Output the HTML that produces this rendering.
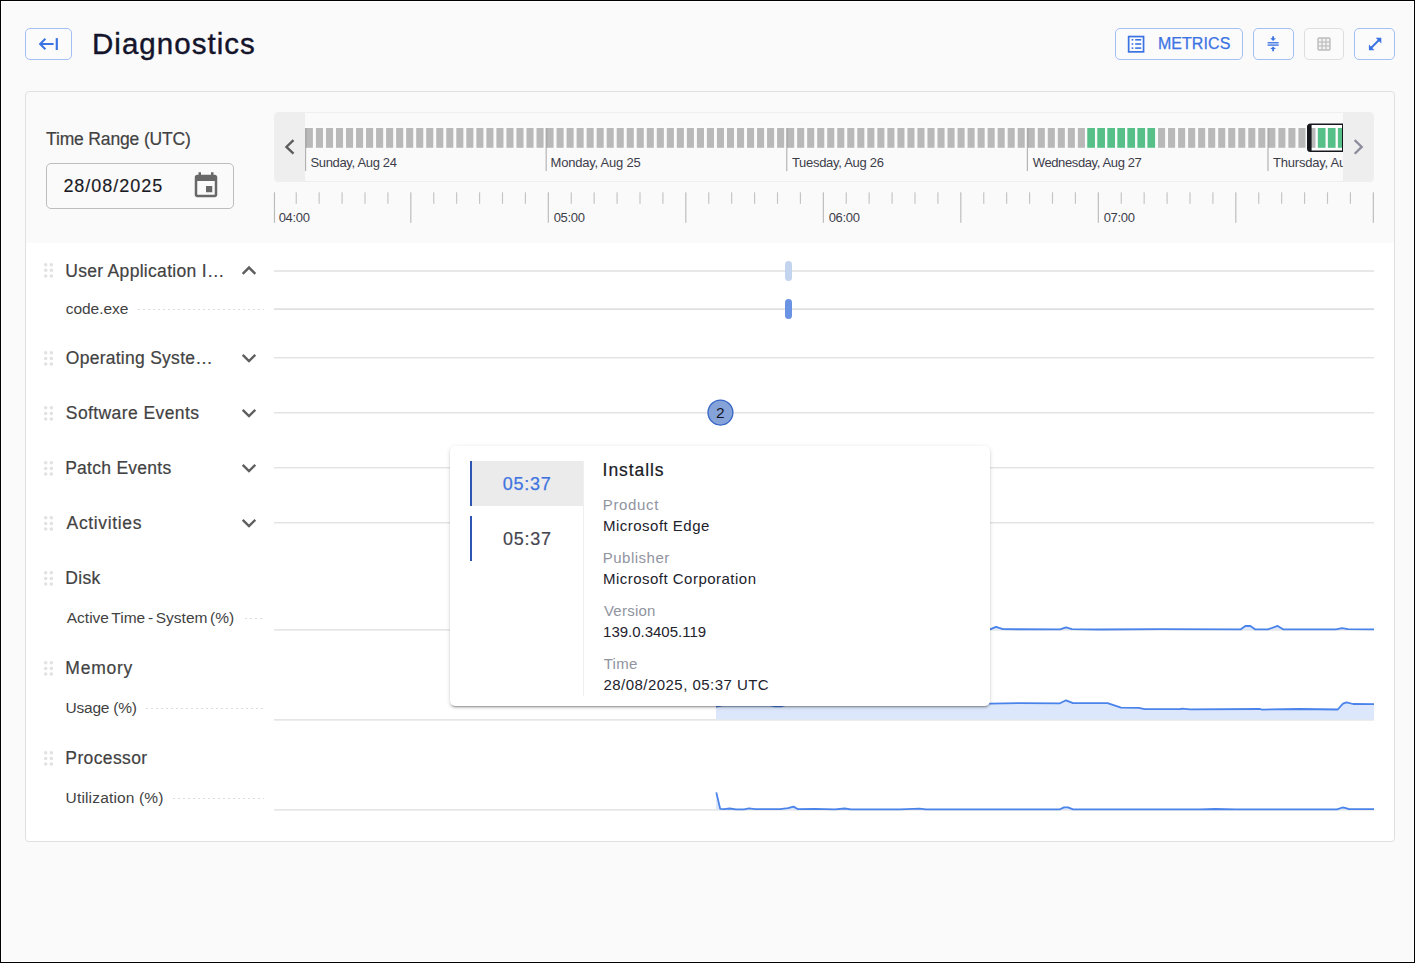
<!DOCTYPE html>
<html lang="en"><head><meta charset="utf-8"><title>Diagnostics</title>
<style>
html,body{margin:0;padding:0}
body{width:1415px;height:963px;position:relative;overflow:hidden;background:#fafafa;font-family:"Liberation Sans",sans-serif}
.b{position:absolute;display:block}
.t{position:absolute;white-space:nowrap;line-height:20px}
.btn{position:absolute;box-sizing:border-box;border:1px solid #a3bff5;border-radius:5px;background:#fbfbfc}
</style></head><body>
<div class="btn" style="left:25px;top:28px;width:47px;height:32px;"></div>
<svg class="b" style="left:36px;top:34px" width="24" height="20" viewBox="0 0 24 20"><g fill="none" stroke="#3b73e3" stroke-width="2"><path d="M17.6 10H4.6"/><path d="M9.4 4.7L4.1 10l5.300 5.300"/><path d="M20.8 4.1v11.9" stroke-width="2.2"/></g></svg>
<div class="t" style="left:91.98px;top:34px;font-size:29.5px;color:#14142b;letter-spacing:1.04px;font-weight:400;-webkit-text-stroke:0.4px #14142b;">Diagnostics</div>
<div class="btn" style="left:1115px;top:28px;width:128px;height:32px;"></div>
<div class="btn" style="left:1253px;top:28px;width:41px;height:32px;"></div>
<div class="btn" style="left:1304px;top:28px;width:40px;height:32px;border-color:#dedede"></div>
<div class="btn" style="left:1354px;top:28px;width:41px;height:32px;"></div>
<svg class="b" style="left:1127px;top:35px" width="18" height="19" viewBox="0 0 18 19"><rect x="1.65" y="1.55" width="14.9" height="15.3" fill="none" stroke="#3b73e3" stroke-width="1.7"/><g fill="#3b73e3"><rect x="4.6" y="4.0" width="1.7" height="1.6"/><rect x="8.2" y="4.0" width="6" height="1.6"/><rect x="4.6" y="8.2" width="1.7" height="1.6"/><rect x="8.2" y="8.2" width="6" height="1.6"/><rect x="4.6" y="12.3" width="1.7" height="1.6"/><rect x="8.2" y="12.3" width="6" height="1.6"/></g></svg>
<div class="t" style="left:1157.89px;top:34px;font-size:16px;color:#3b73e3;letter-spacing:0.074px;font-weight:400;-webkit-text-stroke:0.25px #3b73e3">METRICS</div>
<svg class="b" style="left:1265px;top:35px" width="16" height="18" viewBox="0 0 16 18"><g fill="#3b73e3"><rect x="2.6" y="7.1" width="11.1" height="1.35"/><rect x="2.6" y="9.4" width="11.1" height="1.35"/><path d="M7.2 1.200h1.800v2.100h2L8.100 6.100 5.200 3.300h2z"/><path d="M7.200 16.200h1.800v-2.100h2L8.100 11.600 5.200 14.100h2z"/></g></svg>
<svg class="b" style="left:1317px;top:37px" width="14" height="14" viewBox="0 0 14 14"><rect x="0.3" y="0.3" width="13.4" height="13.4" rx="1.6" fill="#bdbdbd"/><g fill="#f3f3f3"><rect x="1.75" y="1.75" width="2.7" height="2.7"/><rect x="1.75" y="5.65" width="2.7" height="2.7"/><rect x="1.75" y="9.55" width="2.7" height="2.7"/><rect x="5.65" y="1.75" width="2.7" height="2.7"/><rect x="5.65" y="5.65" width="2.7" height="2.7"/><rect x="5.65" y="9.55" width="2.7" height="2.7"/><rect x="9.55" y="1.75" width="2.7" height="2.7"/><rect x="9.55" y="5.65" width="2.7" height="2.7"/><rect x="9.55" y="9.55" width="2.7" height="2.7"/></g></svg>
<svg class="b" style="left:1368px;top:37px" width="14" height="14" viewBox="0 0 14 14"><path d="M3 11L11 3" stroke="#3b73e3" stroke-width="1.9" fill="none"/><path d="M13.3 0.8v5.6L7.7 0.8zM0.9 13.2V7.6l5.6 5.6z" fill="#3b73e3"/></svg>
<div class="b" style="left:25px;top:91px;width:1370px;height:751px;border:1px solid #e0e0e0;border-radius:4px;box-sizing:border-box;background:#fafafa"></div>
<div class="b" style="left:26px;top:243px;width:1368px;height:598px;background:#fff;border-radius:0 0 4px 4px"></div>
<div class="t" style="left:46.01px;top:129px;font-size:17.5px;color:#424242;letter-spacing:-0.148px;font-weight:400;-webkit-text-stroke:0.2px #424242;">Time Range (UTC)</div>
<div class="b" style="left:46px;top:163px;width:188px;height:46px;border:1px solid #bdbdbd;border-radius:5px;box-sizing:border-box"></div>
<div class="t" style="left:63.39px;top:176px;font-size:18px;color:#1a1a24;letter-spacing:0.975px;font-weight:400;-webkit-text-stroke:0.15px #1a1a24;">28/08/2025</div>
<svg class="b" style="left:191px;top:170.75px" width="30" height="30" viewBox="0 0 24 24"><path fill="#686868" d="M17 12h-5v5h5v-5zM16 1v2H8V1H6v2H5c-1.11 0-1.99.9-1.99 2L3 19c0 1.100.89 2 2 2h14c1.100 0 2-.9 2-2V5c0-1.100-.9-2-2-2h-1V1h-2zm3 18H5V8h14v11z"/></svg>
<div class="b" style="left:274px;top:112px;width:1100px;height:70px;background:#fafafa;border:1px solid #efefef;border-radius:4px;box-sizing:border-box;overflow:hidden"><div class="b" style="left:-1px;top:-1px;width:31px;height:70px;background:#eeeeee"></div><div class="b" style="left:1068px;top:-1px;width:31px;height:70px;background:#eeeeee"></div></div>
<svg class="b" style="left:280px;top:136px" width="20" height="22" viewBox="0 0 20 22"><path d="M13.5 4.1L6.400 10.900l7.100 6.800" fill="none" stroke="#5c5c5c" stroke-width="2.3"/></svg>
<svg class="b" style="left:1348px;top:136px" width="20" height="22" viewBox="0 0 20 22"><path d="M6.700 4.100L13.700 10.900l-7.000 6.800" fill="none" stroke="#8c8c9c" stroke-width="2.3"/></svg>
<svg class="b" style="left:305px;top:120px" width="1038" height="60" viewBox="0 0 1038 60"><rect x="1002" y="3.4" width="36" height="28.8" fill="#fff"/><rect x="-0.60" y="7.4" width="9.10" height="21" fill="#fdfdfd"/><rect x="0.00" y="8" width="7.9" height="19.800" fill="#b9b9b9"/><rect x="10.33" y="7.4" width="8.30" height="21" fill="#fdfdfd"/><rect x="10.93" y="8" width="7.1" height="19.800" fill="#b9b9b9"/><rect x="20.35" y="7.4" width="8.30" height="21" fill="#fdfdfd"/><rect x="20.95" y="8" width="7.1" height="19.800" fill="#b9b9b9"/><rect x="30.38" y="7.4" width="8.30" height="21" fill="#fdfdfd"/><rect x="30.98" y="8" width="7.1" height="19.800" fill="#b9b9b9"/><rect x="40.40" y="7.4" width="8.30" height="21" fill="#fdfdfd"/><rect x="41.00" y="8" width="7.1" height="19.800" fill="#b9b9b9"/><rect x="50.42" y="7.4" width="8.30" height="21" fill="#fdfdfd"/><rect x="51.02" y="8" width="7.1" height="19.800" fill="#b9b9b9"/><rect x="60.45" y="7.4" width="8.30" height="21" fill="#fdfdfd"/><rect x="61.05" y="8" width="7.1" height="19.800" fill="#b9b9b9"/><rect x="70.48" y="7.4" width="8.30" height="21" fill="#fdfdfd"/><rect x="71.08" y="8" width="7.1" height="19.800" fill="#b9b9b9"/><rect x="80.50" y="7.4" width="8.30" height="21" fill="#fdfdfd"/><rect x="81.10" y="8" width="7.1" height="19.800" fill="#b9b9b9"/><rect x="90.53" y="7.4" width="8.30" height="21" fill="#fdfdfd"/><rect x="91.13" y="8" width="7.1" height="19.800" fill="#b9b9b9"/><rect x="100.55" y="7.4" width="8.30" height="21" fill="#fdfdfd"/><rect x="101.15" y="8" width="7.1" height="19.800" fill="#b9b9b9"/><rect x="110.58" y="7.4" width="8.30" height="21" fill="#fdfdfd"/><rect x="111.18" y="8" width="7.1" height="19.800" fill="#b9b9b9"/><rect x="120.60" y="7.4" width="8.30" height="21" fill="#fdfdfd"/><rect x="121.20" y="8" width="7.1" height="19.800" fill="#b9b9b9"/><rect x="130.63" y="7.4" width="8.30" height="21" fill="#fdfdfd"/><rect x="131.23" y="8" width="7.1" height="19.800" fill="#b9b9b9"/><rect x="140.65" y="7.4" width="8.30" height="21" fill="#fdfdfd"/><rect x="141.25" y="8" width="7.1" height="19.800" fill="#b9b9b9"/><rect x="150.68" y="7.4" width="8.30" height="21" fill="#fdfdfd"/><rect x="151.28" y="8" width="7.1" height="19.800" fill="#b9b9b9"/><rect x="160.70" y="7.4" width="8.30" height="21" fill="#fdfdfd"/><rect x="161.30" y="8" width="7.1" height="19.800" fill="#b9b9b9"/><rect x="170.73" y="7.4" width="8.30" height="21" fill="#fdfdfd"/><rect x="171.33" y="8" width="7.1" height="19.800" fill="#b9b9b9"/><rect x="180.75" y="7.4" width="8.30" height="21" fill="#fdfdfd"/><rect x="181.35" y="8" width="7.1" height="19.800" fill="#b9b9b9"/><rect x="190.78" y="7.4" width="8.30" height="21" fill="#fdfdfd"/><rect x="191.38" y="8" width="7.1" height="19.800" fill="#b9b9b9"/><rect x="200.80" y="7.4" width="8.30" height="21" fill="#fdfdfd"/><rect x="201.40" y="8" width="7.1" height="19.800" fill="#b9b9b9"/><rect x="210.83" y="7.4" width="8.30" height="21" fill="#fdfdfd"/><rect x="211.43" y="8" width="7.1" height="19.800" fill="#b9b9b9"/><rect x="220.85" y="7.4" width="8.30" height="21" fill="#fdfdfd"/><rect x="221.45" y="8" width="7.1" height="19.800" fill="#b9b9b9"/><rect x="230.88" y="7.4" width="8.30" height="21" fill="#fdfdfd"/><rect x="231.48" y="8" width="7.1" height="19.800" fill="#b9b9b9"/><rect x="240.90" y="7.4" width="8.30" height="21" fill="#fdfdfd"/><rect x="241.50" y="8" width="7.1" height="19.800" fill="#b9b9b9"/><rect x="250.93" y="7.4" width="8.30" height="21" fill="#fdfdfd"/><rect x="251.53" y="8" width="7.1" height="19.800" fill="#b9b9b9"/><rect x="260.95" y="7.4" width="8.30" height="21" fill="#fdfdfd"/><rect x="261.55" y="8" width="7.1" height="19.800" fill="#b9b9b9"/><rect x="270.97" y="7.4" width="8.30" height="21" fill="#fdfdfd"/><rect x="271.57" y="8" width="7.1" height="19.800" fill="#b9b9b9"/><rect x="281.00" y="7.4" width="8.30" height="21" fill="#fdfdfd"/><rect x="281.60" y="8" width="7.1" height="19.800" fill="#b9b9b9"/><rect x="291.02" y="7.4" width="8.30" height="21" fill="#fdfdfd"/><rect x="291.62" y="8" width="7.1" height="19.800" fill="#b9b9b9"/><rect x="301.05" y="7.4" width="8.30" height="21" fill="#fdfdfd"/><rect x="301.65" y="8" width="7.1" height="19.800" fill="#b9b9b9"/><rect x="311.07" y="7.4" width="8.30" height="21" fill="#fdfdfd"/><rect x="311.68" y="8" width="7.1" height="19.800" fill="#b9b9b9"/><rect x="321.10" y="7.4" width="8.30" height="21" fill="#fdfdfd"/><rect x="321.70" y="8" width="7.1" height="19.800" fill="#b9b9b9"/><rect x="331.12" y="7.4" width="8.30" height="21" fill="#fdfdfd"/><rect x="331.72" y="8" width="7.1" height="19.800" fill="#b9b9b9"/><rect x="341.15" y="7.4" width="8.30" height="21" fill="#fdfdfd"/><rect x="341.75" y="8" width="7.1" height="19.800" fill="#b9b9b9"/><rect x="351.17" y="7.4" width="8.30" height="21" fill="#fdfdfd"/><rect x="351.77" y="8" width="7.1" height="19.800" fill="#b9b9b9"/><rect x="361.20" y="7.4" width="8.30" height="21" fill="#fdfdfd"/><rect x="361.80" y="8" width="7.1" height="19.800" fill="#b9b9b9"/><rect x="371.22" y="7.4" width="8.30" height="21" fill="#fdfdfd"/><rect x="371.82" y="8" width="7.1" height="19.800" fill="#b9b9b9"/><rect x="381.25" y="7.4" width="8.30" height="21" fill="#fdfdfd"/><rect x="381.85" y="8" width="7.1" height="19.800" fill="#b9b9b9"/><rect x="391.27" y="7.4" width="8.30" height="21" fill="#fdfdfd"/><rect x="391.88" y="8" width="7.1" height="19.800" fill="#b9b9b9"/><rect x="401.30" y="7.4" width="8.30" height="21" fill="#fdfdfd"/><rect x="401.90" y="8" width="7.1" height="19.800" fill="#b9b9b9"/><rect x="411.32" y="7.4" width="8.30" height="21" fill="#fdfdfd"/><rect x="411.93" y="8" width="7.1" height="19.800" fill="#b9b9b9"/><rect x="421.35" y="7.4" width="8.30" height="21" fill="#fdfdfd"/><rect x="421.95" y="8" width="7.1" height="19.800" fill="#b9b9b9"/><rect x="431.37" y="7.4" width="8.30" height="21" fill="#fdfdfd"/><rect x="431.97" y="8" width="7.1" height="19.800" fill="#b9b9b9"/><rect x="441.40" y="7.4" width="8.30" height="21" fill="#fdfdfd"/><rect x="442.00" y="8" width="7.1" height="19.800" fill="#b9b9b9"/><rect x="451.42" y="7.4" width="8.30" height="21" fill="#fdfdfd"/><rect x="452.02" y="8" width="7.1" height="19.800" fill="#b9b9b9"/><rect x="461.45" y="7.4" width="8.30" height="21" fill="#fdfdfd"/><rect x="462.05" y="8" width="7.1" height="19.800" fill="#b9b9b9"/><rect x="471.47" y="7.4" width="8.30" height="21" fill="#fdfdfd"/><rect x="472.07" y="8" width="7.1" height="19.800" fill="#b9b9b9"/><rect x="481.50" y="7.4" width="8.30" height="21" fill="#fdfdfd"/><rect x="482.10" y="8" width="7.1" height="19.800" fill="#b9b9b9"/><rect x="491.52" y="7.4" width="8.30" height="21" fill="#fdfdfd"/><rect x="492.12" y="8" width="7.1" height="19.800" fill="#b9b9b9"/><rect x="501.55" y="7.4" width="8.30" height="21" fill="#fdfdfd"/><rect x="502.15" y="8" width="7.1" height="19.800" fill="#b9b9b9"/><rect x="511.58" y="7.4" width="8.30" height="21" fill="#fdfdfd"/><rect x="512.18" y="8" width="7.1" height="19.800" fill="#b9b9b9"/><rect x="521.60" y="7.4" width="8.30" height="21" fill="#fdfdfd"/><rect x="522.20" y="8" width="7.1" height="19.800" fill="#b9b9b9"/><rect x="531.62" y="7.4" width="8.30" height="21" fill="#fdfdfd"/><rect x="532.23" y="8" width="7.1" height="19.800" fill="#b9b9b9"/><rect x="541.65" y="7.4" width="8.30" height="21" fill="#fdfdfd"/><rect x="542.25" y="8" width="7.1" height="19.800" fill="#b9b9b9"/><rect x="551.67" y="7.4" width="8.30" height="21" fill="#fdfdfd"/><rect x="552.27" y="8" width="7.1" height="19.800" fill="#b9b9b9"/><rect x="561.70" y="7.4" width="8.30" height="21" fill="#fdfdfd"/><rect x="562.30" y="8" width="7.1" height="19.800" fill="#b9b9b9"/><rect x="571.73" y="7.4" width="8.30" height="21" fill="#fdfdfd"/><rect x="572.33" y="8" width="7.1" height="19.800" fill="#b9b9b9"/><rect x="581.75" y="7.4" width="8.30" height="21" fill="#fdfdfd"/><rect x="582.35" y="8" width="7.1" height="19.800" fill="#b9b9b9"/><rect x="591.77" y="7.4" width="8.30" height="21" fill="#fdfdfd"/><rect x="592.38" y="8" width="7.1" height="19.800" fill="#b9b9b9"/><rect x="601.80" y="7.4" width="8.30" height="21" fill="#fdfdfd"/><rect x="602.40" y="8" width="7.1" height="19.800" fill="#b9b9b9"/><rect x="611.82" y="7.4" width="8.30" height="21" fill="#fdfdfd"/><rect x="612.42" y="8" width="7.1" height="19.800" fill="#b9b9b9"/><rect x="621.85" y="7.4" width="8.30" height="21" fill="#fdfdfd"/><rect x="622.45" y="8" width="7.1" height="19.800" fill="#b9b9b9"/><rect x="631.88" y="7.4" width="8.30" height="21" fill="#fdfdfd"/><rect x="632.48" y="8" width="7.1" height="19.800" fill="#b9b9b9"/><rect x="641.90" y="7.4" width="8.30" height="21" fill="#fdfdfd"/><rect x="642.50" y="8" width="7.1" height="19.800" fill="#b9b9b9"/><rect x="651.92" y="7.4" width="8.30" height="21" fill="#fdfdfd"/><rect x="652.52" y="8" width="7.1" height="19.800" fill="#b9b9b9"/><rect x="661.95" y="7.4" width="8.30" height="21" fill="#fdfdfd"/><rect x="662.55" y="8" width="7.1" height="19.800" fill="#b9b9b9"/><rect x="671.98" y="7.4" width="8.30" height="21" fill="#fdfdfd"/><rect x="672.58" y="8" width="7.1" height="19.800" fill="#b9b9b9"/><rect x="682.00" y="7.4" width="8.30" height="21" fill="#fdfdfd"/><rect x="682.60" y="8" width="7.1" height="19.800" fill="#b9b9b9"/><rect x="692.02" y="7.4" width="8.30" height="21" fill="#fdfdfd"/><rect x="692.62" y="8" width="7.1" height="19.800" fill="#b9b9b9"/><rect x="702.05" y="7.4" width="8.30" height="21" fill="#fdfdfd"/><rect x="702.65" y="8" width="7.1" height="19.800" fill="#b9b9b9"/><rect x="712.07" y="7.4" width="8.30" height="21" fill="#fdfdfd"/><rect x="712.67" y="8" width="7.1" height="19.800" fill="#b9b9b9"/><rect x="722.10" y="7.4" width="8.30" height="21" fill="#fdfdfd"/><rect x="722.70" y="8" width="7.1" height="19.800" fill="#b9b9b9"/><rect x="732.12" y="7.4" width="8.30" height="21" fill="#fdfdfd"/><rect x="732.73" y="8" width="7.1" height="19.800" fill="#b9b9b9"/><rect x="742.15" y="7.4" width="8.30" height="21" fill="#fdfdfd"/><rect x="742.75" y="8" width="7.1" height="19.800" fill="#b9b9b9"/><rect x="752.17" y="7.4" width="8.30" height="21" fill="#fdfdfd"/><rect x="752.77" y="8" width="7.1" height="19.800" fill="#b9b9b9"/><rect x="762.20" y="7.4" width="8.30" height="21" fill="#fdfdfd"/><rect x="762.80" y="8" width="7.1" height="19.800" fill="#b9b9b9"/><rect x="772.23" y="7.4" width="8.30" height="21" fill="#fdfdfd"/><rect x="772.83" y="8" width="7.1" height="19.800" fill="#b9b9b9"/><rect x="781.65" y="7.4" width="8.90" height="21" fill="#fdfdfd"/><rect x="782.25" y="8" width="7.7" height="19.800" fill="#56c088"/><rect x="791.67" y="7.4" width="8.90" height="21" fill="#fdfdfd"/><rect x="792.27" y="8" width="7.7" height="19.800" fill="#56c088"/><rect x="801.70" y="7.4" width="8.90" height="21" fill="#fdfdfd"/><rect x="802.30" y="8" width="7.7" height="19.800" fill="#56c088"/><rect x="811.72" y="7.4" width="8.90" height="21" fill="#fdfdfd"/><rect x="812.32" y="8" width="7.7" height="19.800" fill="#56c088"/><rect x="821.75" y="7.4" width="8.90" height="21" fill="#fdfdfd"/><rect x="822.35" y="8" width="7.7" height="19.800" fill="#56c088"/><rect x="831.77" y="7.4" width="8.90" height="21" fill="#fdfdfd"/><rect x="832.38" y="8" width="7.7" height="19.800" fill="#56c088"/><rect x="841.80" y="7.4" width="8.90" height="21" fill="#fdfdfd"/><rect x="842.40" y="8" width="7.7" height="19.800" fill="#56c088"/><rect x="852.42" y="7.4" width="8.30" height="21" fill="#fdfdfd"/><rect x="853.02" y="8" width="7.1" height="19.800" fill="#b9b9b9"/><rect x="862.45" y="7.4" width="8.30" height="21" fill="#fdfdfd"/><rect x="863.05" y="8" width="7.1" height="19.800" fill="#b9b9b9"/><rect x="872.48" y="7.4" width="8.30" height="21" fill="#fdfdfd"/><rect x="873.08" y="8" width="7.1" height="19.800" fill="#b9b9b9"/><rect x="882.50" y="7.4" width="8.30" height="21" fill="#fdfdfd"/><rect x="883.10" y="8" width="7.1" height="19.800" fill="#b9b9b9"/><rect x="892.52" y="7.4" width="8.30" height="21" fill="#fdfdfd"/><rect x="893.12" y="8" width="7.1" height="19.800" fill="#b9b9b9"/><rect x="902.55" y="7.4" width="8.30" height="21" fill="#fdfdfd"/><rect x="903.15" y="8" width="7.1" height="19.800" fill="#b9b9b9"/><rect x="912.57" y="7.4" width="8.30" height="21" fill="#fdfdfd"/><rect x="913.17" y="8" width="7.1" height="19.800" fill="#b9b9b9"/><rect x="922.60" y="7.4" width="8.30" height="21" fill="#fdfdfd"/><rect x="923.20" y="8" width="7.1" height="19.800" fill="#b9b9b9"/><rect x="932.62" y="7.4" width="8.30" height="21" fill="#fdfdfd"/><rect x="933.23" y="8" width="7.1" height="19.800" fill="#b9b9b9"/><rect x="942.65" y="7.4" width="8.30" height="21" fill="#fdfdfd"/><rect x="943.25" y="8" width="7.1" height="19.800" fill="#b9b9b9"/><rect x="952.67" y="7.4" width="8.30" height="21" fill="#fdfdfd"/><rect x="953.27" y="8" width="7.1" height="19.800" fill="#b9b9b9"/><rect x="962.70" y="7.4" width="8.30" height="21" fill="#fdfdfd"/><rect x="963.30" y="8" width="7.1" height="19.800" fill="#b9b9b9"/><rect x="972.73" y="7.4" width="8.30" height="21" fill="#fdfdfd"/><rect x="973.33" y="8" width="7.1" height="19.800" fill="#b9b9b9"/><rect x="982.75" y="7.4" width="8.30" height="21" fill="#fdfdfd"/><rect x="983.35" y="8" width="7.1" height="19.800" fill="#b9b9b9"/><rect x="992.77" y="7.4" width="8.30" height="21" fill="#fdfdfd"/><rect x="993.38" y="8" width="7.1" height="19.800" fill="#b9b9b9"/><rect x="1002.80" y="7.4" width="8.30" height="21" fill="#fdfdfd"/><rect x="1003.40" y="8" width="7.1" height="19.800" fill="#b9b9b9"/><rect x="1012.23" y="7.4" width="8.90" height="21" fill="#fdfdfd"/><rect x="1012.83" y="8" width="7.7" height="19.800" fill="#56c088"/><rect x="1022.25" y="7.4" width="8.90" height="21" fill="#fdfdfd"/><rect x="1022.85" y="8" width="7.7" height="19.800" fill="#56c088"/><rect x="1032.28" y="7.4" width="8.90" height="21" fill="#fdfdfd"/><rect x="1032.88" y="8" width="7.7" height="19.800" fill="#56c088"/><rect x="0.00" y="8" width="1.9" height="19.8" fill="#ababab"/><rect x="0.00" y="27.8" width="1.15" height="23.2" fill="#b2b2b2"/><rect x="240.60" y="8" width="1.9" height="19.8" fill="#ababab"/><rect x="240.60" y="27.8" width="1.15" height="23.2" fill="#b2b2b2"/><rect x="481.20" y="8" width="1.9" height="19.8" fill="#ababab"/><rect x="481.20" y="27.8" width="1.15" height="23.2" fill="#b2b2b2"/><rect x="721.80" y="8" width="1.9" height="19.8" fill="#ababab"/><rect x="721.80" y="27.8" width="1.15" height="23.2" fill="#b2b2b2"/><rect x="962.40" y="8" width="1.9" height="19.8" fill="#ababab"/><rect x="962.40" y="27.8" width="1.15" height="23.2" fill="#b2b2b2"/></svg>
<div class="b" style="left:0;top:150px;width:1343px;height:26px;overflow:hidden">
<div class="t" style="left:310.41px;top:3px;font-size:13px;color:#3d3d4a;letter-spacing:-0.327px;font-weight:400;">Sunday, Aug 24</div>
<div class="t" style="left:550.53px;top:3px;font-size:13px;color:#3d3d4a;letter-spacing:-0.213px;font-weight:400;">Monday, Aug 25</div>
<div class="t" style="left:791.91px;top:3px;font-size:13px;color:#3d3d4a;letter-spacing:-0.295px;font-weight:400;">Tuesday, Aug 26</div>
<div class="t" style="left:1032.74px;top:3px;font-size:13px;color:#3d3d4a;letter-spacing:-0.379px;font-weight:400;">Wednesday, Aug 27</div>
<div class="t" style="left:1273.11px;top:3px;font-size:13px;color:#3d3d4a;letter-spacing:-0.231px;font-weight:400;">Thursday, Aug 28</div>
</div>
<svg class="b" style="left:1300px;top:118px" width="50" height="40" viewBox="0 0 50 40"><path d="M10.5 5.4h32.5v28.7H10.5a3.500 3.500 0 0 1-3.500-3.500V8.900a3.500 3.500 0 0 1 3.500-3.500z M11.6 7v25.500h30.400V7z" fill="#16161d" fill-rule="evenodd"/></svg>
<svg class="b" style="left:270px;top:190px" width="1110" height="36" viewBox="0 0 1110 36"><rect x="3.90" y="2.3" width="1.15" height="30.500" fill="#bbbbbb"/><rect x="25.67" y="2.3" width="1.15" height="11.500" fill="#c4c4c4"/><rect x="48.58" y="2.3" width="1.15" height="11.500" fill="#c4c4c4"/><rect x="71.50" y="2.3" width="1.15" height="11.500" fill="#c4c4c4"/><rect x="94.42" y="2.3" width="1.15" height="11.500" fill="#c4c4c4"/><rect x="117.33" y="2.3" width="1.15" height="11.500" fill="#c4c4c4"/><rect x="140.25" y="2.3" width="1.15" height="30.500" fill="#bbbbbb"/><rect x="163.17" y="2.3" width="1.15" height="11.500" fill="#c4c4c4"/><rect x="186.08" y="2.3" width="1.15" height="11.500" fill="#c4c4c4"/><rect x="209.00" y="2.3" width="1.15" height="11.500" fill="#c4c4c4"/><rect x="231.92" y="2.3" width="1.15" height="11.500" fill="#c4c4c4"/><rect x="254.83" y="2.3" width="1.15" height="11.500" fill="#c4c4c4"/><rect x="277.75" y="2.3" width="1.15" height="30.500" fill="#bbbbbb"/><rect x="300.67" y="2.3" width="1.15" height="11.500" fill="#c4c4c4"/><rect x="323.58" y="2.3" width="1.15" height="11.500" fill="#c4c4c4"/><rect x="346.50" y="2.3" width="1.15" height="11.500" fill="#c4c4c4"/><rect x="369.42" y="2.3" width="1.15" height="11.500" fill="#c4c4c4"/><rect x="392.33" y="2.3" width="1.15" height="11.500" fill="#c4c4c4"/><rect x="415.25" y="2.3" width="1.15" height="30.500" fill="#bbbbbb"/><rect x="438.17" y="2.3" width="1.15" height="11.500" fill="#c4c4c4"/><rect x="461.08" y="2.3" width="1.15" height="11.500" fill="#c4c4c4"/><rect x="484.00" y="2.3" width="1.15" height="11.500" fill="#c4c4c4"/><rect x="506.92" y="2.3" width="1.15" height="11.500" fill="#c4c4c4"/><rect x="529.83" y="2.3" width="1.15" height="11.500" fill="#c4c4c4"/><rect x="552.75" y="2.3" width="1.15" height="30.500" fill="#bbbbbb"/><rect x="575.67" y="2.3" width="1.15" height="11.500" fill="#c4c4c4"/><rect x="598.58" y="2.3" width="1.15" height="11.500" fill="#c4c4c4"/><rect x="621.50" y="2.3" width="1.15" height="11.500" fill="#c4c4c4"/><rect x="644.42" y="2.3" width="1.15" height="11.500" fill="#c4c4c4"/><rect x="667.33" y="2.3" width="1.15" height="11.500" fill="#c4c4c4"/><rect x="690.25" y="2.3" width="1.15" height="30.500" fill="#bbbbbb"/><rect x="713.17" y="2.3" width="1.15" height="11.500" fill="#c4c4c4"/><rect x="736.08" y="2.3" width="1.15" height="11.500" fill="#c4c4c4"/><rect x="759.00" y="2.3" width="1.15" height="11.500" fill="#c4c4c4"/><rect x="781.92" y="2.3" width="1.15" height="11.500" fill="#c4c4c4"/><rect x="804.83" y="2.3" width="1.15" height="11.500" fill="#c4c4c4"/><rect x="827.75" y="2.3" width="1.15" height="30.500" fill="#bbbbbb"/><rect x="850.67" y="2.3" width="1.15" height="11.500" fill="#c4c4c4"/><rect x="873.58" y="2.3" width="1.15" height="11.500" fill="#c4c4c4"/><rect x="896.50" y="2.3" width="1.15" height="11.500" fill="#c4c4c4"/><rect x="919.42" y="2.3" width="1.15" height="11.500" fill="#c4c4c4"/><rect x="942.33" y="2.3" width="1.15" height="11.500" fill="#c4c4c4"/><rect x="965.25" y="2.3" width="1.15" height="30.500" fill="#bbbbbb"/><rect x="988.17" y="2.3" width="1.15" height="11.500" fill="#c4c4c4"/><rect x="1011.08" y="2.3" width="1.15" height="11.500" fill="#c4c4c4"/><rect x="1034.00" y="2.3" width="1.15" height="11.500" fill="#c4c4c4"/><rect x="1056.92" y="2.3" width="1.15" height="11.500" fill="#c4c4c4"/><rect x="1079.83" y="2.3" width="1.15" height="11.500" fill="#c4c4c4"/><rect x="1102.75" y="2.3" width="1.15" height="30.500" fill="#bbbbbb"/></svg>
<div class="t" style="left:278.69px;top:208px;font-size:13px;color:#3d3d4a;letter-spacing:-0.304px;font-weight:400;">04:00</div>
<div class="t" style="left:553.69px;top:208px;font-size:13px;color:#3d3d4a;letter-spacing:-0.304px;font-weight:400;">05:00</div>
<div class="t" style="left:828.69px;top:208px;font-size:13px;color:#3d3d4a;letter-spacing:-0.304px;font-weight:400;">06:00</div>
<div class="t" style="left:1103.69px;top:208px;font-size:13px;color:#3d3d4a;letter-spacing:-0.304px;font-weight:400;">07:00</div>
<svg class="b" style="left:43px;top:261px" width="10" height="19" viewBox="0 0 10 19"><g fill="#e2e2e2" transform="translate(0,0.30)"><circle cx="2.7" cy="3.4" r="1.75"/><circle cx="2.7" cy="9.0" r="1.75"/><circle cx="2.7" cy="14.6" r="1.75"/><circle cx="8.3" cy="3.4" r="1.75"/><circle cx="8.3" cy="9.0" r="1.75"/><circle cx="8.3" cy="14.6" r="1.75"/></g></svg>
<div class="t" style="left:65.25px;top:261px;font-size:17.5px;color:#424242;letter-spacing:0.304px;font-weight:400;-webkit-text-stroke:0.2px #424242;">User Application I…</div>
<svg class="b" style="left:241px;top:263px" width="16" height="15" viewBox="0 0 16 15"><path d="M1.7 10.55L8 4.250l6.300 6.300" transform="translate(0,0.30)" fill="none" stroke="#5f5f5f" stroke-width="2.4"/></svg>
<div class="b" style="left:274px;top:270px;width:1100px;height:1px;background:#e8e8e8"></div><div class="b" style="left:274px;top:271px;width:1100px;height:1px;background:#e8e8e8"></div>
<svg class="b" style="left:43px;top:349px" width="10" height="19" viewBox="0 0 10 19"><g fill="#e2e2e2" transform="translate(0,0.40)"><circle cx="2.7" cy="3.4" r="1.75"/><circle cx="2.7" cy="9.0" r="1.75"/><circle cx="2.7" cy="14.6" r="1.75"/><circle cx="8.3" cy="3.4" r="1.75"/><circle cx="8.3" cy="9.0" r="1.75"/><circle cx="8.3" cy="14.6" r="1.75"/></g></svg>
<div class="t" style="left:65.77px;top:348px;font-size:17.5px;color:#424242;letter-spacing:0.268px;font-weight:400;-webkit-text-stroke:0.2px #424242;">Operating Syste…</div>
<svg class="b" style="left:241px;top:351px" width="16" height="15" viewBox="0 0 16 15"><path d="M1.7 3.450L8 9.750l6.300-6.300" transform="translate(0,0.40)" fill="none" stroke="#5f5f5f" stroke-width="2.4"/></svg>
<div class="b" style="left:274px;top:357px;width:1100px;height:1px;background:#e3e3e3"></div><div class="b" style="left:274px;top:358px;width:1100px;height:1px;background:#f2f2f2"></div>
<svg class="b" style="left:43px;top:404px" width="10" height="19" viewBox="0 0 10 19"><g fill="#e2e2e2" transform="translate(0,0.40)"><circle cx="2.7" cy="3.4" r="1.75"/><circle cx="2.7" cy="9.0" r="1.75"/><circle cx="2.7" cy="14.6" r="1.75"/><circle cx="8.3" cy="3.4" r="1.75"/><circle cx="8.3" cy="9.0" r="1.75"/><circle cx="8.3" cy="14.6" r="1.75"/></g></svg>
<div class="t" style="left:65.81px;top:403px;font-size:17.5px;color:#424242;letter-spacing:0.408px;font-weight:400;-webkit-text-stroke:0.2px #424242;">Software Events</div>
<svg class="b" style="left:241px;top:406px" width="16" height="15" viewBox="0 0 16 15"><path d="M1.7 3.450L8 9.750l6.300-6.300" transform="translate(0,0.40)" fill="none" stroke="#5f5f5f" stroke-width="2.4"/></svg>
<div class="b" style="left:274px;top:412px;width:1100px;height:1px;background:#e3e3e3"></div><div class="b" style="left:274px;top:413px;width:1100px;height:1px;background:#f2f2f2"></div>
<svg class="b" style="left:43px;top:459px" width="10" height="19" viewBox="0 0 10 19"><g fill="#e2e2e2" transform="translate(0,0.40)"><circle cx="2.7" cy="3.4" r="1.75"/><circle cx="2.7" cy="9.0" r="1.75"/><circle cx="2.7" cy="14.6" r="1.75"/><circle cx="8.3" cy="3.4" r="1.75"/><circle cx="8.3" cy="9.0" r="1.75"/><circle cx="8.3" cy="14.6" r="1.75"/></g></svg>
<div class="t" style="left:65.16px;top:458px;font-size:17.5px;color:#424242;letter-spacing:0.269px;font-weight:400;-webkit-text-stroke:0.2px #424242;">Patch Events</div>
<svg class="b" style="left:241px;top:461px" width="16" height="15" viewBox="0 0 16 15"><path d="M1.7 3.450L8 9.750l6.300-6.300" transform="translate(0,0.40)" fill="none" stroke="#5f5f5f" stroke-width="2.4"/></svg>
<div class="b" style="left:274px;top:467px;width:1100px;height:1px;background:#e3e3e3"></div><div class="b" style="left:274px;top:468px;width:1100px;height:1px;background:#f2f2f2"></div>
<svg class="b" style="left:43px;top:514px" width="10" height="19" viewBox="0 0 10 19"><g fill="#e2e2e2" transform="translate(0,0.40)"><circle cx="2.7" cy="3.4" r="1.75"/><circle cx="2.7" cy="9.0" r="1.75"/><circle cx="2.7" cy="14.6" r="1.75"/><circle cx="8.3" cy="3.4" r="1.75"/><circle cx="8.3" cy="9.0" r="1.75"/><circle cx="8.3" cy="14.6" r="1.75"/></g></svg>
<div class="t" style="left:66.57px;top:513px;font-size:17.5px;color:#424242;letter-spacing:0.647px;font-weight:400;-webkit-text-stroke:0.2px #424242;">Activities</div>
<svg class="b" style="left:241px;top:516px" width="16" height="15" viewBox="0 0 16 15"><path d="M1.7 3.450L8 9.750l6.300-6.300" transform="translate(0,0.40)" fill="none" stroke="#5f5f5f" stroke-width="2.4"/></svg>
<div class="b" style="left:274px;top:522px;width:1100px;height:1px;background:#e3e3e3"></div><div class="b" style="left:274px;top:523px;width:1100px;height:1px;background:#f2f2f2"></div>
<div class="t" style="left:65.84px;top:299px;font-size:15.5px;color:#424242;letter-spacing:-0.066px;font-weight:400;">code.exe</div>
<div class="b" style="left:138px;top:309px;width:126px;height:1px;background:repeating-linear-gradient(90deg,#dcdcdc 0 2px,transparent 2px 5px)"></div>
<div class="b" style="left:274px;top:308px;width:1100px;height:1px;background:#e8e8e8"></div><div class="b" style="left:274px;top:309px;width:1100px;height:1px;background:#e0e0e0"></div>
<svg class="b" style="left:43px;top:569px" width="10" height="19" viewBox="0 0 10 19"><g fill="#e2e2e2" transform="translate(0,0.40)"><circle cx="2.7" cy="3.4" r="1.75"/><circle cx="2.7" cy="9.0" r="1.75"/><circle cx="2.7" cy="14.6" r="1.75"/><circle cx="8.3" cy="3.4" r="1.75"/><circle cx="8.3" cy="9.0" r="1.75"/><circle cx="8.3" cy="14.6" r="1.75"/></g></svg>
<div class="t" style="left:65.36px;top:568px;font-size:17.5px;color:#424242;letter-spacing:0.328px;font-weight:400;-webkit-text-stroke:0.2px #424242;">Disk</div>
<svg class="b" style="left:43px;top:659px" width="10" height="19" viewBox="0 0 10 19"><g fill="#e2e2e2" transform="translate(0,0.40)"><circle cx="2.7" cy="3.4" r="1.75"/><circle cx="2.7" cy="9.0" r="1.75"/><circle cx="2.7" cy="14.6" r="1.75"/><circle cx="8.3" cy="3.4" r="1.75"/><circle cx="8.3" cy="9.0" r="1.75"/><circle cx="8.3" cy="14.6" r="1.75"/></g></svg>
<div class="t" style="left:65.36px;top:658px;font-size:17.5px;color:#424242;letter-spacing:0.754px;font-weight:400;-webkit-text-stroke:0.2px #424242;">Memory</div>
<svg class="b" style="left:43px;top:749px" width="10" height="19" viewBox="0 0 10 19"><g fill="#e2e2e2" transform="translate(0,0.40)"><circle cx="2.7" cy="3.4" r="1.75"/><circle cx="2.7" cy="9.0" r="1.75"/><circle cx="2.7" cy="14.6" r="1.75"/><circle cx="8.3" cy="3.4" r="1.75"/><circle cx="8.3" cy="9.0" r="1.75"/><circle cx="8.3" cy="14.6" r="1.75"/></g></svg>
<div class="t" style="left:65.36px;top:748px;font-size:17.5px;color:#424242;letter-spacing:0.381px;font-weight:400;-webkit-text-stroke:0.2px #424242;">Processor</div>
<div class="t" style="left:66.77px;top:608px;font-size:15.5px;color:#424242;letter-spacing:-0.006px;font-weight:400;word-spacing:-1.6px;">Active Time - System (%)</div>
<div class="b" style="left:245px;top:618px;width:19px;height:1px;background:repeating-linear-gradient(90deg,#dcdcdc 0 2px,transparent 2px 5px)"></div>
<div class="b" style="left:274px;top:629px;width:1100px;height:1px;background:#e6e6e6"></div><div class="b" style="left:274px;top:630px;width:1100px;height:1px;background:#ededed"></div>
<div class="t" style="left:65.6px;top:698px;font-size:15.5px;color:#424242;letter-spacing:-0.232px;font-weight:400;">Usage (%)</div>
<div class="b" style="left:146px;top:708px;width:118px;height:1px;background:repeating-linear-gradient(90deg,#dcdcdc 0 2px,transparent 2px 5px)"></div>
<div class="b" style="left:274px;top:719px;width:1100px;height:1px;background:#e6e6e6"></div><div class="b" style="left:274px;top:720px;width:1100px;height:1px;background:#ededed"></div>
<div class="t" style="left:65.6px;top:788px;font-size:15.5px;color:#424242;letter-spacing:0.161px;font-weight:400;">Utilization (%)</div>
<div class="b" style="left:173px;top:798px;width:91px;height:1px;background:repeating-linear-gradient(90deg,#dcdcdc 0 2px,transparent 2px 5px)"></div>
<div class="b" style="left:274px;top:809px;width:1100px;height:1px;background:#e6e6e6"></div><div class="b" style="left:274px;top:810px;width:1100px;height:1px;background:#ededed"></div>
<div class="b" style="left:785px;top:261px;width:7px;height:20px;border-radius:3.5px;background:#c3d4ee"></div>
<div class="b" style="left:785px;top:299px;width:7px;height:20px;border-radius:3.5px;background:#6a93e4"></div>
<svg class="b" style="left:0;top:0" width="1415" height="963" viewBox="0 0 1415 963"><polygon points="716.0,706.7 719.0,706.1 724.0,705.2 770.0,705.4 775.0,706.3 781.0,706.3 786.0,705.0 850.0,704.6 990.0,703.6 1020.0,703.1 1060.0,703.3 1066.0,700.3 1073.0,703.2 1107.6,703.2 1121.0,707.7 1138.8,707.8 1144.7,709.2 1180.0,709.1 1182.0,708.6 1190.0,709.4 1260.0,709.0 1262.0,709.6 1300.0,709.0 1337.7,709.5 1343.0,703.7 1346.6,702.4 1353.0,704.0 1374.0,704.2 1374,719.6 716,719.6" fill="#dce7fb"/><polygon points="990.0,629.4 996.0,626.8 1003.0,629.2 1060.0,629.4 1066.0,627.4 1072.0,629.2 1100.0,629.5 1160.0,629.2 1240.8,629.3 1245.3,626.0 1250.4,626.0 1255.0,629.3 1268.0,629.3 1277.7,625.9 1283.0,629.3 1336.0,629.3 1342.0,628.2 1348.0,629.2 1374.0,629.4 1374,629.6 990,629.6" fill="#dce7fb"/><polygon points="716.3,792.4 720.2,808.9 724.0,809.2 729.7,808.5 736.0,809.3 744.0,809.3 749.0,808.4 755.0,809.2 780.0,809.1 788.0,808.2 793.5,806.6 798.0,809.2 815.0,808.8 835.0,809.3 844.6,808.5 851.0,809.3 900.0,809.3 919.6,808.7 926.0,809.4 1060.0,809.3 1064.0,807.4 1068.0,807.4 1073.0,809.3 1200.0,809.3 1215.0,809.0 1236.0,809.3 1337.0,809.3 1342.5,807.5 1345.0,807.9 1349.0,809.2 1374.0,809.2 1374,809.6 716,809.6" fill="#dce7fb"/><polyline points="990.0,629.4 996.0,626.8 1003.0,629.2 1060.0,629.4 1066.0,627.4 1072.0,629.2 1100.0,629.5 1160.0,629.2 1240.8,629.3 1245.3,626.0 1250.4,626.0 1255.0,629.3 1268.0,629.3 1277.7,625.9 1283.0,629.3 1336.0,629.3 1342.0,628.2 1348.0,629.2 1374.0,629.4" fill="none" stroke="#4a83ea" stroke-width="1.8" stroke-linejoin="round"/><polyline points="716.0,706.7 719.0,706.1 724.0,705.2 770.0,705.4 775.0,706.3 781.0,706.3 786.0,705.0 850.0,704.6 990.0,703.6 1020.0,703.1 1060.0,703.3 1066.0,700.3 1073.0,703.2 1107.6,703.2 1121.0,707.7 1138.8,707.8 1144.7,709.2 1180.0,709.1 1182.0,708.6 1190.0,709.4 1260.0,709.0 1262.0,709.6 1300.0,709.0 1337.7,709.5 1343.0,703.7 1346.6,702.4 1353.0,704.0 1374.0,704.2" fill="none" stroke="#4a83ea" stroke-width="1.8" stroke-linejoin="round"/><polyline points="716.3,792.4 720.2,808.9 724.0,809.2 729.7,808.5 736.0,809.3 744.0,809.3 749.0,808.4 755.0,809.2 780.0,809.1 788.0,808.2 793.5,806.6 798.0,809.2 815.0,808.8 835.0,809.3 844.6,808.5 851.0,809.3 900.0,809.3 919.6,808.7 926.0,809.4 1060.0,809.3 1064.0,807.4 1068.0,807.4 1073.0,809.3 1200.0,809.3 1215.0,809.0 1236.0,809.3 1337.0,809.3 1342.5,807.5 1345.0,807.9 1349.0,809.2 1374.0,809.2" fill="none" stroke="#4a83ea" stroke-width="1.8" stroke-linejoin="round"/><circle cx="720.45" cy="412.600" r="12.450" fill="#86a3d9" stroke="#3565c6" stroke-width="1.3"/></svg>
<div class="t" style="left:716.02px;top:403px;font-size:15.5px;color:#15151f;letter-spacing:0px;font-weight:400;">2</div>
<div class="b" style="left:450px;top:446px;width:540px;height:260px;background:#fff;border-radius:5px;box-shadow:0 3px 1px -2px rgba(0,0,0,.2),0 2px 2px 0 rgba(0,0,0,.14),0 1px 5px 0 rgba(0,0,0,.12)"></div>
<div class="b" style="left:470px;top:461px;width:113px;height:45px;background:#ebebeb;border-left:2px solid #2f55b4;box-sizing:border-box"></div>
<div class="b" style="left:470px;top:516px;width:2px;height:45px;background:#2f55b4"></div>
<div class="b" style="left:583px;top:461px;width:1px;height:235px;background:#efefef"></div>
<div class="t" style="left:502.8px;top:474px;font-size:18px;color:#3f74e0;letter-spacing:0.741px;font-weight:400;-webkit-text-stroke:0.25px #3f74e0;">05:37</div>
<div class="t" style="left:503.0px;top:529px;font-size:18px;color:#45454f;letter-spacing:0.741px;font-weight:400;-webkit-text-stroke:0.2px #45454f;">05:37</div>
<div class="t" style="left:602.59px;top:460px;font-size:17.5px;color:#1a1a24;letter-spacing:0.94px;font-weight:400;-webkit-text-stroke:0.2px #1a1a24;">Installs</div>
<div class="t" style="left:602.77px;top:495px;font-size:15px;color:#9094a0;letter-spacing:0.641px;font-weight:400;">Product</div>
<div class="t" style="left:602.97px;top:516px;font-size:15px;color:#22222c;letter-spacing:0.489px;font-weight:400;">Microsoft Edge</div>
<div class="t" style="left:602.77px;top:548px;font-size:15px;color:#9094a0;letter-spacing:0.493px;font-weight:400;">Publisher</div>
<div class="t" style="left:602.97px;top:569px;font-size:15px;color:#22222c;letter-spacing:0.481px;font-weight:400;">Microsoft Corporation</div>
<div class="t" style="left:603.93px;top:601px;font-size:15px;color:#9094a0;letter-spacing:0.247px;font-weight:400;">Version</div>
<div class="t" style="left:603.06px;top:622px;font-size:15px;color:#22222c;letter-spacing:-0.009px;font-weight:400;">139.0.3405.119</div>
<div class="t" style="left:603.66px;top:654px;font-size:15px;color:#9094a0;letter-spacing:0.29px;font-weight:400;">Time</div>
<div class="t" style="left:603.45px;top:675px;font-size:15px;color:#22222c;letter-spacing:0.464px;font-weight:400;">28/08/2025, 05:37 UTC</div>
<div class="b" style="left:0;top:0;width:1415px;height:963px;box-sizing:border-box;border:1px solid #000;box-shadow:inset 0 0 0 1px #fff;pointer-events:none"></div>
</body></html>
